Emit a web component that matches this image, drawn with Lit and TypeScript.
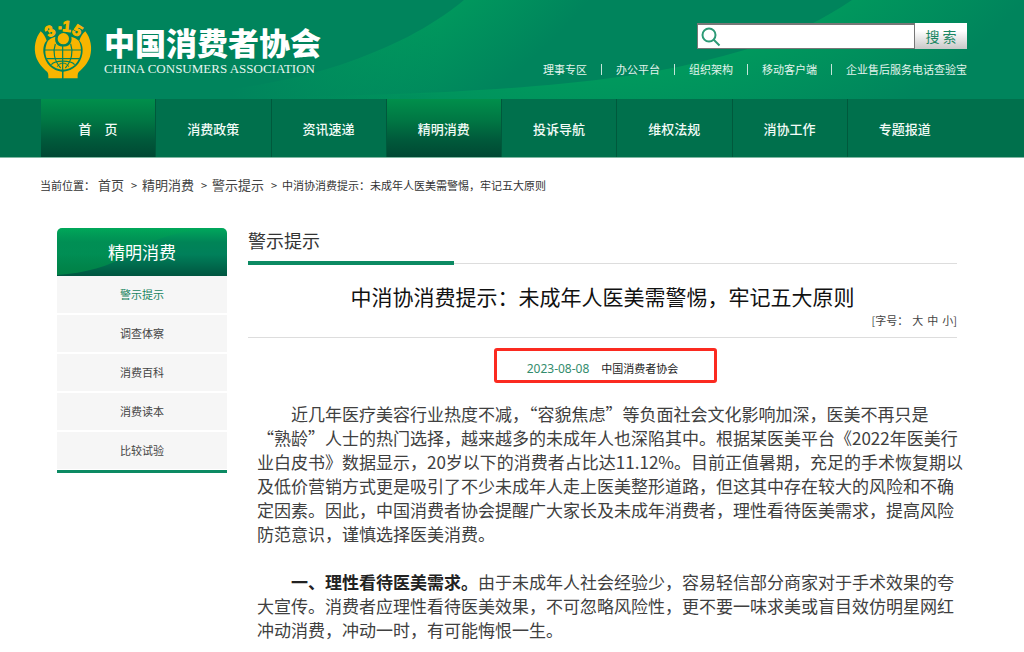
import { LitElement, html, css, svg } from "lit";
import { customElement, property, state } from "lit/decorators.js";

const TOP_LINKS = ["理事专区", "办公平台", "组织架构", "移动客户端", "企业售后服务电话查验宝"];
const NAV = ["首　页", "消费政策", "资讯速递", "精明消费", "投诉导航", "维权法规", "消协工作", "专题报道"];
const SIDE = ["警示提示", "调查体察", "消费百科", "消费读本", "比较试验"];

const emblem = svg`
  <g fill="#f8b500">
    <path d="M48 62C32 82 26 112 34 138C40 156 54 172 68 184C72 190 71 196 71 203H112V183C84 180 62 160 57 130C54 112 58 98 66 90C62 78 56 68 48 62Z"/>
    <path d="M182 62C198 82 204 112 196 138C190 156 176 172 162 184C158 190 159 196 159 203H116V183C146 180 168 160 173 130C176 112 172 98 164 90C168 78 174 68 182 62Z"/>
    <path d="M70 90C76 84 84 80 92 78C90 88 92 98 100 104C106 109 126 109 132 104C140 98 142 88 140 78C148 80 156 84 162 90C172 108 172 134 158 153C138 184 92 184 72 153C58 134 60 108 70 90Z"/>
    <circle cx="116" cy="84" r="17"/>
    <g font-family="Liberation Sans, sans-serif" font-weight="700" font-size="46" text-anchor="middle" stroke="#f8b500" stroke-width="3">
      <text transform="translate(84 74) rotate(-34)">3</text>
      <text transform="translate(107 68)">·</text>
      <text transform="translate(125 62) rotate(6)">1</text>
      <text transform="translate(150 73) rotate(32)">5</text>
    </g>
  </g>
  <g fill="none" stroke="#00845c" stroke-width="3.5">
    <path d="M60 118H170M66 144H164M114 106V203"/>
    <path d="M92 100C84 122 88 150 108 172M138 100C146 122 142 150 122 172"/>
    <path d="M80 162C92 148 138 148 150 162"/>
    <path d="M98 168C104 154 126 154 132 168" stroke-width="3"/>
  </g>`;

@customElement("site-header")
class SiteHeader extends LitElement {
  static styles = css`
    :host { display: block; }
    .banner { display: grid; height: 99px; background: #00845c; overflow: hidden; }
    .waves { grid-area: 1 / 1; width: 100%; height: 99px; }
    .bar { grid-area: 1 / 1; display: flex; justify-content: space-between; padding: 0 57px 0 34px; }
    .brand { display: flex; gap: 12px; padding-top: 19px; color: #fff; text-decoration: none; align-items: flex-start; }
    .emblem { width: 58px; height: 60px; overflow: visible; }
    .names { display: flex; flex-direction: column; padding-top: 5px; }
    .cn { font-size: 31px; line-height: 36px; font-weight: 900; }
    .en { font: 13px/16px "Liberation Serif", serif; padding-top: 1px; color: #e6f5ef; white-space: nowrap; }
    .tools { display: flex; flex-direction: column; align-items: flex-end; padding-top: 23px; gap: 12px; }
    .search { display: flex; width: 270px; height: 26px; }
    .field { flex: 1; display: flex; align-items: center; background: #fff; border: 1px solid #777; border-top-width: 2px; box-sizing: border-box; }
    .field svg { width: 20px; height: 20px; margin-left: 3px; flex: none; }
    .field input { flex: 1; min-width: 0; border: 0; outline: 0; background: none; font: inherit; font-size: 13px; }
    .go { width: 52px; border: 0; padding: 0; background: linear-gradient(#fff 30%, #c8c8c8); color: #1b8763; font: inherit; font-size: 14px; }
    .links { display: flex; align-items: center; font-size: 11px; line-height: 16px; }
    .links a { color: #e3f4ed; text-decoration: none; }
    .links a + a::before { content: ""; display: inline-block; width: 1px; height: 11px; background: #c5e5d9; margin: 0 14px 0 14px; vertical-align: -1px; }
    .nav { background: #00704c; border-bottom: 1px solid #7fb8a3; padding: 0 62px 0 41px; display: flex; height: 58px; }
    .nav a { flex: 1; display: flex; align-items: center; justify-content: center; color: #f2fbf7; text-decoration: none; font-size: 13px; font-weight: 500; border-right: 1px solid #00593c; }
    .nav a:last-child { border-right: 0; }
    .nav .on { background: linear-gradient(#008f4b, #007844 35%, #005a3b 70%, #004833); }
  `;
  render() {
    return html`
      <header>
        <div class="banner">
          <svg class="waves" viewBox="0 0 1024 99" preserveAspectRatio="none" aria-hidden="true">
            <defs>
              <radialGradient id="a" gradientUnits="userSpaceOnUse" cx="210" cy="-310" r="490">
                <stop offset="0.81" stop-color="#00985d"/><stop offset="1" stop-color="#00985d" stop-opacity="0"/>
              </radialGradient>
              <radialGradient id="b" gradientUnits="userSpaceOnUse" cx="570" cy="-420" r="620">
                <stop offset="0.81" stop-color="#00985d"/><stop offset="1" stop-color="#00985d" stop-opacity="0"/>
              </radialGradient>
              <linearGradient id="c" gradientUnits="userSpaceOnUse" x1="230" y1="0" x2="440" y2="0">
                <stop offset="0" stop-color="#00845c"/><stop offset="1" stop-color="#00845c" stop-opacity="0"/>
              </linearGradient>
            </defs>
            <path fill="url(#a)" d="M464 0C430 28 390 48 340 65C300 78 250 88 200 93V99H700L760 0Z"/>
            <path fill="#00845c" d="M400 95C500 92 600 84 682 66C740 55 800 36 852 0H1024V99H400Z"/>
            <path fill="url(#b)" d="M240 97C460 96 600 84 682 66C740 53 800 36 852 0H1024V99H240Z"/>
            <rect fill="url(#c)" x="0" y="0" width="440" height="99"/>
          </svg>
          <div class="bar">
            <a class="brand" href="#">
              <svg class="emblem" viewBox="28 26 174 178" aria-hidden="true">${emblem}</svg>
              <span class="names">
                <span class="cn">中国消费者协会</span>
                <span class="en">CHINA CONSUMERS ASSOCIATION</span>
              </span>
            </a>
            <div class="tools">
              <form class="search" role="search" @submit=${(e: Event) => e.preventDefault()}>
                <label class="field">
                  <svg viewBox="0 0 20 20" fill="none" stroke="#2c9a76" stroke-width="2" aria-hidden="true">
                    <circle cx="8" cy="8" r="6.5"/><path d="M12.5 12.5L18.5 18.5"/>
                  </svg>
                  <input type="search" aria-label="搜索" />
                </label>
                <button class="go">搜 索</button>
              </form>
              <div class="links">${TOP_LINKS.map((t) => html`<a href="#">${t}</a>`)}</div>
            </div>
          </div>
        </div>
        <nav class="nav">
          ${NAV.map((t, i) => html`<a href="#" class=${i === 0 || i === 3 ? "on" : ""}>${t}</a>`)}
        </nav>
      </header>
    `;
  }
}

@customElement("side-menu")
class SideMenu extends LitElement {
  @property() heading = "";
  @property({ type: Array }) items: string[] = [];
  static styles = css`
    :host { display: block; }
    .head { display: grid; height: 48px; border-radius: 5px 5px 0 0; overflow: hidden; color: #fff; background: linear-gradient(#00a85c, #008457 30%, #00805a 55%, #005540); }
    .head svg { grid-area: 1 / 1; width: 100%; height: 48px; }
    .head h2 { grid-area: 1 / 1; margin: 0; place-self: center; font-size: 17px; line-height: 24px; font-weight: 400; }
    ul { list-style: none; margin: 0; padding: 0; border-bottom: 3px solid #0c8a63; }
    li { border-bottom: 2px solid #fff; }
    li:last-child { border-bottom-width: 1px; }
    a { display: block; background: #f6f6f6; color: #444; text-align: center; text-decoration: none; font-size: 11px; line-height: 37px; }
    .on { color: #17845f; }
  `;
  render() {
    return html`
      <div class="head">
        <svg viewBox="0 0 170 48" preserveAspectRatio="none" aria-hidden="true">
          <defs><linearGradient id="g" x1="0" y1="0" x2="0" y2="1">
            <stop offset="0" stop-color="#00a850" stop-opacity="0.2"/><stop offset="1" stop-color="#009c48" stop-opacity="0.6"/>
          </linearGradient></defs>
          <path fill="url(#g)" d="M0 0H150C110 6 96 12 76 24C54 38 30 45 0 47Z"/>
        </svg>
        <h2>${this.heading}</h2>
      </div>
      <ul>${this.items.map((t, i) => html`<li><a href="#" class=${i === 0 ? "on" : ""}>${t}</a></li>`)}</ul>
    `;
  }
}

@customElement("app-root")
class AppRoot extends LitElement {
  @state() private size = "m";
  static styles = css`
    :host { display: block; min-height: 100vh; background: #fff; color: #404040; font-family: "Noto Sans CJK SC", "Noto Sans", sans-serif; }
    .crumbs { display: flex; align-items: center; padding: 17px 40px 0; font-size: 11px; line-height: 20px; color: #333; white-space: nowrap; }
    .crumbs a { font-size: 13px; color: #444; text-decoration: none; }
    .crumbs a:first-of-type { margin-left: 3px; }
    .crumbs i { font-style: normal; width: 18px; box-sizing: border-box; padding-left: 7px; }
    .page { display: grid; grid-template-columns: 170px minmax(0, 1fr); gap: 21px; align-items: start; padding: 33px 58px 0 57px; }
    .top { margin-right: 9px; }
    .section { margin: 0; font-size: 18px; line-height: 24px; font-weight: 400; color: #333; border-bottom: 1px solid #ddd; }
    .section span { display: block; width: 29%; padding-bottom: 9px; border-bottom: 4px solid #0c8a63; margin-bottom: -2px; }
    .title { margin: 16px 0 0; text-align: center; font-size: 21px; line-height: 32px; font-weight: 400; color: #111; }
    .sizes { display: flex; justify-content: flex-end; gap: 4px; font-size: 11px; line-height: 16px; padding-bottom: 9px; border-bottom: 1px solid #ddd; color: #444; }
    .sizes button { border: 0; padding: 0; background: none; color: inherit; font: inherit; }
    .meta-row { display: flex; justify-content: center; padding: 10px 0 0 6px; }
    .meta { display: flex; align-items: center; justify-content: center; gap: 12px; width: 223px; height: 35px; box-sizing: border-box; border: 3px solid #fb2a20; border-radius: 3px; padding: 5px 6px 0 0; font-size: 11px; color: #222; }
    .meta time { font: 12px "Noto Sans", sans-serif; color: #338c6d; }
    .body { padding: 19px 0 0 9px; font-size: 17px; line-height: 24px; }
    .body.s { font-size: 15px; }
    .body.l { font-size: 20px; line-height: 30px; }
    .body p { margin: 0 0 24px; text-indent: 2em; }
    .body b { color: #222; }
  `;
  render() {
    return html`
      <site-header lang="zh-CN"></site-header>
      <nav class="crumbs" lang="zh-CN">
        <span>当前位置：</span><a href="#">首页</a><i>&gt;</i><a href="#">精明消费</a><i>&gt;</i><a href="#">警示提示</a><i>&gt;</i><span>中消协消费提示：未成年人医美需警惕，牢记五大原则</span>
      </nav>
      <div class="page" lang="zh-CN">
        <side-menu heading="精明消费" .items=${SIDE}></side-menu>
        <main>
          <div class="top">
            <h2 class="section"><span>警示提示</span></h2>
            <h1 class="title">中消协消费提示：未成年人医美需警惕，牢记五大原则</h1>
            <div class="sizes">
              <span>[字号：</span>
              <button @click=${() => (this.size = "l")}>大</button>
              <button @click=${() => (this.size = "m")}>中</button>
              <span><button @click=${() => (this.size = "s")}>小</button>]</span>
            </div>
            <div class="meta-row">
              <div class="meta"><time datetime="2023-08-08">2023-08-08</time><span>中国消费者协会</span></div>
            </div>
          </div>
          <article class="body ${this.size}">
            <p>近几年医疗美容行业热度不减，“容貌焦虑”等负面社会文化影响加深，医美不再只是<br>“熟龄”人士的热门选择，越来越多的未成年人也深陷其中。根据某医美平台《2022年医美行业白皮书》数据显示，20岁以下的消费者占比达11.12%。目前正值暑期，充足的手术恢复期以及低价营销方式更是吸引了不少未成年人走上医美整形道路，但这其中存在较大的风险和不确定因素。因此，中国消费者协会提醒广大家长及未成年消费者，理性看待医美需求，提高风险防范意识，谨慎选择医美消费。</p>
            <p><b>一、理性看待医美需求。</b>由于未成年人社会经验少，容易轻信部分商家对于手术效果的夸大宣传。消费者应理性看待医美效果，不可忽略风险性，更不要一味求美或盲目效仿明星网红冲动消费，冲动一时，有可能悔恨一生。</p>
          </article>
        </main>
      </div>
    `;
  }
}
